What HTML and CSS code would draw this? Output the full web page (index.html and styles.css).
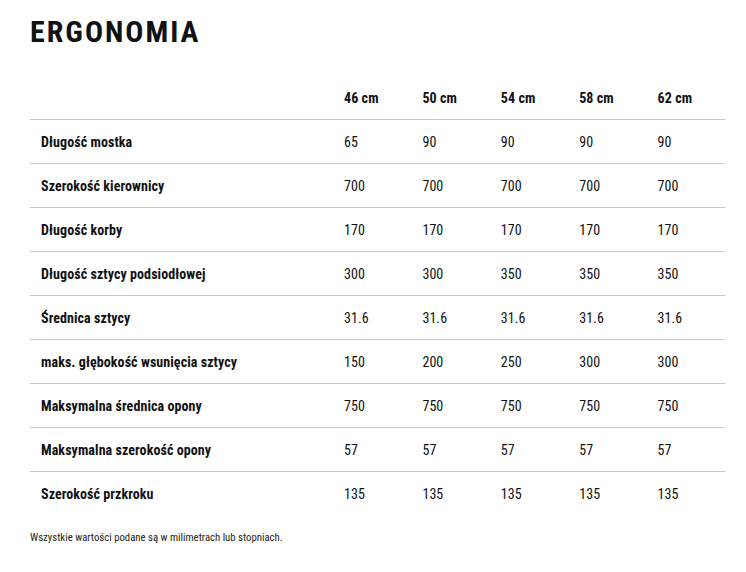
FILE: index.html
```html
<!DOCTYPE html>
<html lang="pl">
<head>
<meta charset="utf-8">
<title>Ergonomia</title>
<link rel="stylesheet" href="styles.css">
</head>
<body>
<main class="page">
  <h1 class="title">ERGONOMIA</h1>
  <table class="geo">
    <thead>
      <tr><th class="label"></th><th>46 cm</th><th>50 cm</th><th>54 cm</th><th>58 cm</th><th>62 cm</th></tr>
    </thead>
    <tbody>
      <tr><th class="label">Długość mostka</th><td>65</td><td>90</td><td>90</td><td>90</td><td>90</td></tr>
      <tr><th class="label">Szerokość kierownicy</th><td>700</td><td>700</td><td>700</td><td>700</td><td>700</td></tr>
      <tr><th class="label">Długość korby</th><td>170</td><td>170</td><td>170</td><td>170</td><td>170</td></tr>
      <tr><th class="label">Długość sztycy podsiodłowej</th><td>300</td><td>300</td><td>350</td><td>350</td><td>350</td></tr>
      <tr><th class="label">Średnica sztycy</th><td>31.6</td><td>31.6</td><td>31.6</td><td>31.6</td><td>31.6</td></tr>
      <tr><th class="label">maks. głębokość wsunięcia sztycy</th><td>150</td><td>200</td><td>250</td><td>300</td><td>300</td></tr>
      <tr><th class="label">Maksymalna średnica opony</th><td>750</td><td>750</td><td>750</td><td>750</td><td>750</td></tr>
      <tr><th class="label">Maksymalna szerokość opony</th><td>57</td><td>57</td><td>57</td><td>57</td><td>57</td></tr>
      <tr><th class="label">Szerokość przkroku</th><td>135</td><td>135</td><td>135</td><td>135</td><td>135</td></tr>
    </tbody>
  </table>
  <p class="note">Wszystkie wartości podane są w milimetrach lub stopniach.</p>
</main>
</body>
</html>
```

FILE: styles.css
```css
html, body {
  margin: 0;
  padding: 0;
  background: #ffffff;
}

body {
  font-family: "Roboto Condensed", "Liberation Sans Narrow", "Roboto", "Liberation Sans", sans-serif;
  font-stretch: condensed;
  color: #111111;
}

.page {
  width: 695px;
  padding: 14px 0 0 30px;
}

.title {
  margin: 0;
  font-size: 30px;
  line-height: 36px;
  font-weight: 700;
  letter-spacing: 2px;
  color: #111111;
}

.geo {
  margin-top: 26px;
  width: 695px;
  border-collapse: collapse;
  table-layout: fixed;
  font-size: 14px;
  letter-spacing: 0.08px;
}

.geo th,
.geo td {
  height: 43px;
  padding: 0 0 0 11px;
  text-align: left;
  vertical-align: middle;
  border-bottom: 1px solid #c9c9c9;
}

.geo th {
  font-weight: 700;
}

.geo td {
  font-weight: 400;
}

.geo th.label {
  width: 292px;
}

.geo tbody tr:last-child th,
.geo tbody tr:last-child td {
  border-bottom: none;
}

.note {
  margin: 16px 0 0;
  font-size: 10.75px;
  line-height: 14px;
  color: #222222;
}
```
